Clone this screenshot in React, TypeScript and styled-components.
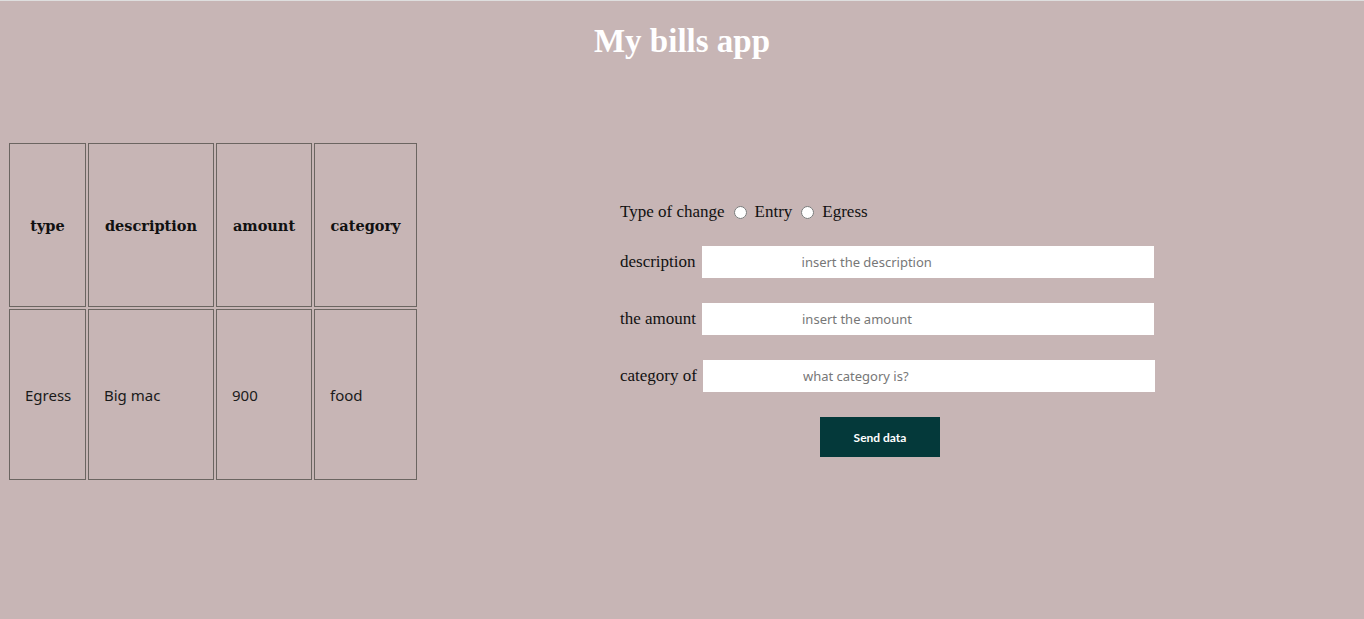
import React from "react";
import styled, { createGlobalStyle } from "styled-components";

const GlobalStyle = createGlobalStyle`
  * {
    box-sizing: border-box;
  }
  body {
    margin: 0;
    background-color: #c7b5b5;
  }
`;

const Page = styled.div`
  min-height: 100vh;
  border-top: 1px solid #dedede;
  background-color: #c7b5b5;
`;

const Title = styled.h1`
  margin: 0;
  padding-top: 22px;
  text-align: center;
  font-family: "Liberation Serif", serif;
  font-size: 33px;
  line-height: 36px;
  font-weight: bold;
  color: #ffffff;
`;

const Main = styled.main`
  display: flex;
  align-items: flex-start;
  padding: 82px 0 0 7px;
`;

const Table = styled.table`
  border-spacing: 2px;
  border-collapse: separate;
`;

const HeadRow = styled.tr`
  height: 164px;
`;

const BodyRow = styled.tr`
  height: 171px;
`;

const Th = styled.th<{ $w: number }>`
  width: ${({ $w }) => $w}px;
  padding: 0;
  border: 1px solid #6b6561;
  text-align: center;
  font-family: "DejaVu Serif", serif;
  font-size: 14.5px;
  font-weight: bold;
  color: #111;
`;

const Td = styled.td`
  padding: 0 0 0 15px;
  border: 1px solid #6b6561;
  text-align: left;
  font-family: "Noto Sans", sans-serif;
  font-size: 15px;
  color: #1a1a1a;
`;

const Form = styled.form`
  display: flex;
  flex-direction: column;
  gap: 25px;
  margin: 60px 0 0 201px;
`;

const Row = styled.div`
  display: flex;
  align-items: center;
  gap: 6px;
  font-family: "Liberation Serif", serif;
  font-size: 17px;
  color: #111;
`;

const RadioRow = styled(Row)`
  gap: 0;
  height: 20px;
  padding-top: 2px;
`;

const Radio = styled.input`
  width: 13px;
  height: 13px;
  margin: 0 8px 0 9px;
`;

const Field = styled.input`
  width: 452px;
  height: 32px;
  border: none;
  outline: none;
  padding: 0 0 0 100px;
  background: #ffffff;
  font-family: "Noto Sans", sans-serif;
  font-size: 13px;
  &::placeholder {
    color: #777;
  }
`;

const SendButton = styled.button`
  align-self: flex-start;
  margin-left: 200px;
  width: 120px;
  height: 40px;
  border: none;
  background-color: #04393a;
  color: #ffffff;
  font-family: Lato, sans-serif;
  font-weight: bold;
  font-size: 12px;
  cursor: pointer;
`;

const bills = [{ type: "Egress", description: "Big mac", amount: "900", category: "food" }];

export default function App() {
  return (
    <Page>
      <GlobalStyle />
      <Title>My bills app</Title>
      <Main>
        <Table>
          <thead>
            <HeadRow>
              <Th $w={77}>type</Th>
              <Th $w={126}>description</Th>
              <Th $w={96}>amount</Th>
              <Th $w={103}>category</Th>
            </HeadRow>
          </thead>
          <tbody>
            {bills.map((b, i) => (
              <BodyRow key={i}>
                <Td>{b.type}</Td>
                <Td>{b.description}</Td>
                <Td>{b.amount}</Td>
                <Td>{b.category}</Td>
              </BodyRow>
            ))}
          </tbody>
        </Table>
        <Form onSubmit={(e) => e.preventDefault()}>
          <RadioRow>
            Type of change
            <Radio type="radio" name="type" id="entry" />
            <label htmlFor="entry">Entry</label>
            <Radio type="radio" name="type" id="egress" />
            <label htmlFor="egress">Egress</label>
          </RadioRow>
          <Row>
            <label>description</label>
            <Field placeholder="insert the description" />
          </Row>
          <Row>
            <label>the amount</label>
            <Field placeholder="insert the amount" />
          </Row>
          <Row>
            <label>category of</label>
            <Field placeholder="what category is?" />
          </Row>
          <SendButton type="submit">Send data</SendButton>
        </Form>
      </Main>
    </Page>
  );
}
